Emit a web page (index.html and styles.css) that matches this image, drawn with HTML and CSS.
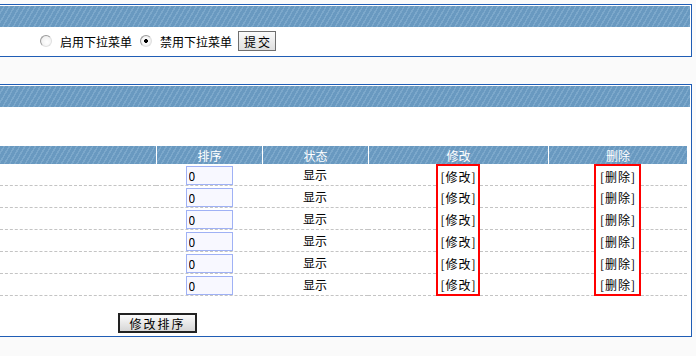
FILE: index.html
```html
<!DOCTYPE html>
<html lang="zh-CN">
<head>
  <meta charset="UTF-8">
  <title>菜单管理</title>
  <link rel="stylesheet" href="styles.css">
</head>
<body>

  <!-- 下拉菜单设置 -->
  <div class="panel">
    <div class="panel-head"></div>
    <div class="menu-switch">
      <label><input type="radio" name="dropdown" value="1"> 启用下拉菜单</label>
      <label><input type="radio" name="dropdown" value="0" checked> 禁用下拉菜单</label>
      <button class="btn-small">提交</button>
    </div>
  </div>

  <!-- 菜单列表 -->
  <div class="panel panel-list">
    <div class="panel-head"></div>
    <table class="menu-table">
      <colgroup>
        <col class="c-name">
        <col class="c-order">
        <col class="c-state">
        <col class="c-edit">
        <col class="c-del">
      </colgroup>
      <thead>
        <tr>
          <th></th>
          <th>排序</th>
          <th>状态</th>
          <th>修改</th>
          <th>删除</th>
        </tr>
      </thead>
      <tbody id="rows"></tbody>
    </table>
    <div class="list-foot">
      <button class="btn-order">修改排序</button>
    </div>
  </div>

  <script>
    const count = 6;
    const tbody = document.getElementById("rows");

    for (let i = 0; i < count; i++) {
      const pos = i === 0 ? " first" : (i === count - 1 ? " last" : "");
      const tr = document.createElement("tr");
      tr.innerHTML =
        '<td class="line"></td>' +
        '<td class="line"><input class="order-input" type="text" value="0"></td>' +
        '<td class="line">显示</td>' +
        '<td><div class="mark-cell"><span class="fill"></span><a class="mark mark-edit' + pos + '" href="#">[修改]</a><span class="fill"></span></div></td>' +
        '<td><div class="mark-cell"><span class="fill"></span><a class="mark mark-del' + pos + '" href="#">[删除]</a><span class="fill"></span></div></td>';
      tbody.appendChild(tr);
    }
  </script>

</body>
</html>
```

FILE: styles.css
```css
body {
  margin: 0;
  padding-top: 4px;
  background-color: #fafafa;
  font-family: "Noto Sans CJK SC", "Noto Sans", sans-serif;
  font-size: 12px;
  color: #000;
}

.panel {
  box-sizing: border-box;
  width: 692px;
  background-color: #fff;
  border: 1px solid #1f5db5;
  border-left: none;
  padding: 1px 1px 1px 0;
}

.panel-list {
  margin-top: 27px;
  padding-bottom: 3px;
}

.panel-head {
  height: 21px;
  background: repeating-linear-gradient(120deg, #6999c0 0, #6999c0 3px, #7ca8cb 3px, #7ca8cb 4.5px);
}

/* 启用 / 禁用 */
.menu-switch {
  height: 28px;
  display: flex;
  align-items: center;
  padding-left: 40px;
}

.menu-switch label {
  display: flex;
  align-items: center;
  margin-right: 8px;
}

.menu-switch input[type="radio"] {
  appearance: none;
  width: 12px;
  height: 12px;
  margin: 0 8px 0 0;
  border-radius: 50%;
  border: 1px solid #9a9a9a;
  border-right-color: #e0e0e0;
  border-bottom-color: #e0e0e0;
  background: radial-gradient(circle at 60% 60%, #fff 0, #f2f2f2 60%, #d4d4d4 100%);
}

.menu-switch input[type="radio"]:checked {
  background: radial-gradient(circle, #000 0, #000 1.6px, #fff 2.2px, #f2f2f2 60%, #d4d4d4 100%);
}

.btn-small {
  height: 20px;
  padding: 0 3px 0 5px;
  margin-left: -2px;
  font-family: inherit;
  font-size: 12px;
  letter-spacing: 2px;
  border: 1px solid #6e6e6e;
  background: linear-gradient(#fafafa, #dedede);
  color: #000;
}

/* 列表 */
.menu-table {
  width: 687px;
  table-layout: fixed;
  border-collapse: separate;
  border-spacing: 0;
  margin-top: 39px;
}

.c-name { width: 156px; }
.c-order { width: 106px; }
.c-state { width: 106px; }
.c-edit { width: 180px; }
.c-del { width: 139px; }

.menu-table th {
  height: 18px;
  padding: 0;
  font-weight: normal;
  color: #fff;
  border-left: 1px solid #fff;
  background: repeating-linear-gradient(120deg, #6999c0 0, #6999c0 3px, #7ca8cb 3px, #7ca8cb 4.5px);
}

.menu-table th:first-child {
  border-left: none;
}

.menu-table td {
  padding: 0;
  text-align: center;
  vertical-align: middle;
}

.menu-table td.line {
  height: 21px;
  border-bottom: 1px dashed #c4c4c4;
}

.order-input {
  box-sizing: border-box;
  width: 47px;
  height: 19px;
  padding: 0 2px;
  margin: 0;
  border: 1px solid #9fb1f5;
  background-color: #f8f8ff;
  font-family: inherit;
  font-size: 12px;
  color: #000;
  vertical-align: middle;
}

.mark-cell {
  display: flex;
  height: 22px;
}

.fill {
  flex: 1;
  border-bottom: 1px dashed #c4c4c4;
}

.mark {
  box-sizing: border-box;
  height: 22px;
  display: flex;
  align-items: center;
  justify-content: center;
  background-color: #fff;
  border-left: 2px solid #f00;
  border-right: 2px solid #f00;
  color: #000;
  text-decoration: none;
  letter-spacing: 1px;
  padding-left: 1px;
}

.mark-edit { width: 44px; }
.mark-del { width: 47px; }

.mark.first { border-top: 2px solid #f00; }
.mark.last { border-bottom: 2px solid #f00; }

.list-foot {
  padding: 17px 0 0 118px;
}

.btn-order {
  height: 20px;
  width: 79px;
  padding: 0;
  font-family: inherit;
  font-size: 12px;
  letter-spacing: 2px;
  border: 2px solid #222;
  background: linear-gradient(#fbfbfb, #d6d6d6);
  color: #000;
}
```
